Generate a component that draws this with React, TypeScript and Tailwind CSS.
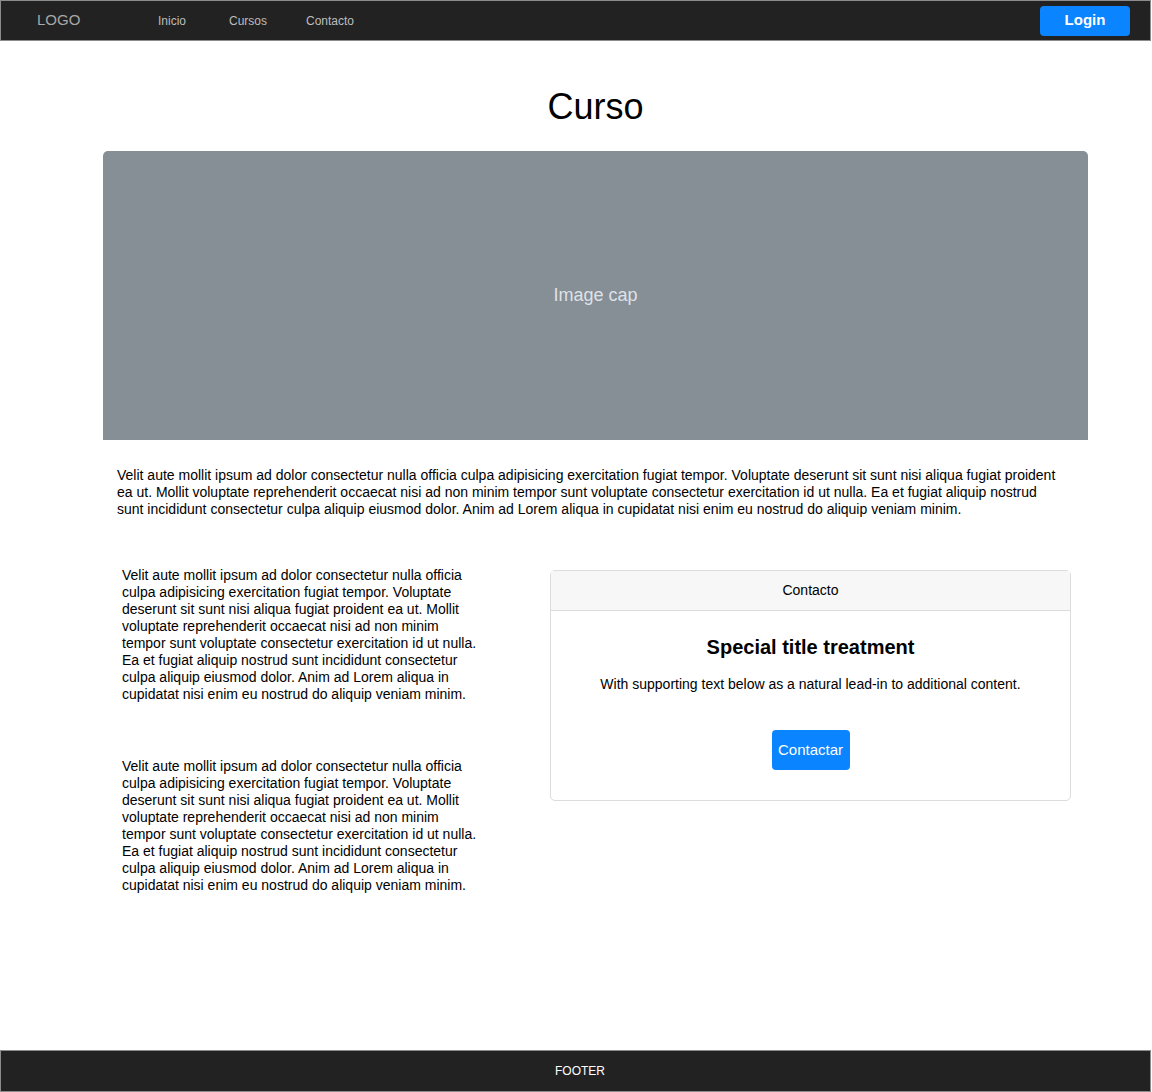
const lorem =
  "Velit aute mollit ipsum ad dolor consectetur nulla officia culpa adipisicing exercitation fugiat tempor. Voluptate deserunt sit sunt nisi aliqua fugiat proident ea ut. Mollit voluptate reprehenderit occaecat nisi ad non minim tempor sunt voluptate consectetur exercitation id ut nulla. Ea et fugiat aliquip nostrud sunt incididunt consectetur culpa aliquip eiusmod dolor. Anim ad Lorem aliqua in cupidatat nisi enim eu nostrud do aliquip veniam minim.";

export default function App() {
  return (
    <div className="flex min-h-[1092px] w-[1152px] flex-col bg-white font-['Liberation_Sans',Arial,sans-serif] text-black">
      {/* navbar */}
      <header className="flex h-[41px] w-[1151px] items-center border border-[#8c8c8c] bg-[#222222]">
        <span className="ml-[36px] w-[121px] text-[15px] text-[#a8a8a8]">LOGO</span>
        <nav className="flex text-[12px] text-[#bdbdbd]">
          <a className="w-[71px]">Inicio</a>
          <a className="w-[77px]">Cursos</a>
          <a>Contacto</a>
        </nav>
        <button className="ml-auto mr-[20px] h-[30px] w-[90px] rounded-[4px] bg-[#0a84ff] text-[15px] font-bold text-white">
          Login
        </button>
      </header>

      <main className="flex-1">
        <div className="ml-[103px] w-[985px]">
          <h1 className="mt-[45px] text-center text-[36px] leading-[41px]">Curso</h1>

          <div className="mt-[24px] flex h-[289px] items-center justify-center rounded-t-[5px] bg-[#868e96] text-[18px] text-[#dee2e6]">
            Image cap
          </div>

          <p className="ml-[14px] mt-[27px] w-[944px] text-[14px] leading-[17px]">{lorem}</p>

          <div className="mt-[52px] flex">
            <div className="ml-[19px] w-[362px] text-[14px] leading-[17px]">
              <p className="mt-[-3px]">{lorem}</p>
              <p className="mt-[55px]">{lorem}</p>
            </div>

            <div className="ml-[66px] w-[521px] self-start rounded-[5px] border border-[#dcdcdc]">
              <div className="flex h-[40px] items-center justify-center border-b border-[#dcdcdc] bg-[#f7f7f7] text-[14px]">
                Contacto
              </div>
              <div className="flex flex-col items-center pb-[30px] pt-[24px]">
                <h5 className="text-[20px] font-bold leading-[24px]">Special title treatment</h5>
                <p className="mt-[17px] text-[14px] leading-[17px]">
                  With supporting text below as a natural lead-in to additional content.
                </p>
                <button className="mt-[37px] h-[40px] w-[78px] rounded-[4px] bg-[#0a84ff] text-[15px] text-white">
                  Contactar
                </button>
              </div>
            </div>
          </div>
        </div>
      </main>

      <footer className="flex h-[42px] w-[1151px] items-center justify-center border border-[#8c8c8c] bg-[#222222] pl-[9px] text-[12px] text-white">
        FOOTER
      </footer>
    </div>
  );
}
